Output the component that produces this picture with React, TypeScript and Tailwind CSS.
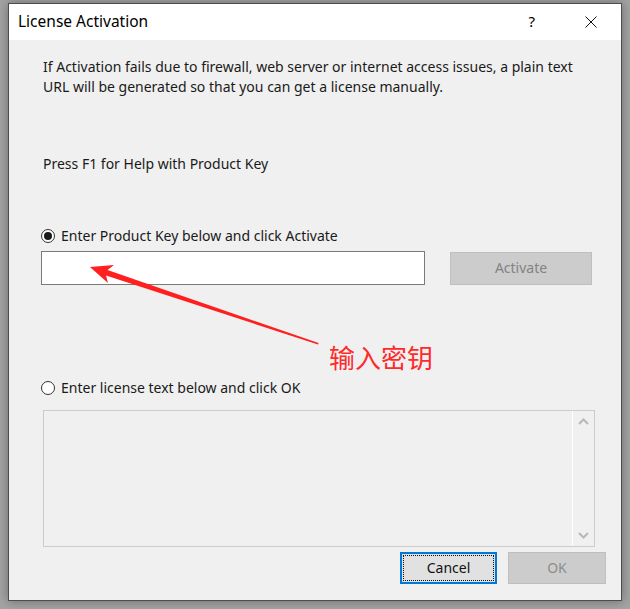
import React from "react";

const font = { fontFamily: '"Noto Sans", "Open Sans", Arial, sans-serif' };

function Radio({ checked, label }: { checked: boolean; label: string }) {
  return (
    <div className="flex h-[20px] items-center gap-[6px]">
      <span className="flex h-[14px] w-[14px] items-center justify-center rounded-full border border-[#333333] bg-white">
        {checked && <span className="h-[8px] w-[8px] rounded-full bg-[#1a1a1a]" />}
      </span>
      <span>{label}</span>
    </div>
  );
}

function Annotation() {
  // arrow: tip at (90,267), tail at (318,344)
  return (
    <div className="pointer-events-none absolute inset-0">
      <svg width="630" height="609" className="absolute left-0 top-0">
        <polygon points="90,267 108,283 106,275.5 318,344.5 318.5,343 107.5,270 114,265" fill="#ff1f1f" />
      </svg>
      <div
        className="absolute left-[329px] top-[339px] text-[26px] leading-[36px] text-[#ff2a2a]"
        style={{ fontFamily: '"Noto Sans CJK SC", sans-serif' }}
      >
        输入密钥
      </div>
    </div>
  );
}

export default function App() {
  return (
    <div className="relative h-[609px] w-[630px] overflow-hidden bg-[#a3a3a3] pl-[8px] pt-[3px]" style={font}>
      <div className="flex h-[598px] w-[614px] flex-col border border-[#4d4d4d] bg-[#f0f0f0] text-[14px] text-[#1a1a1a] shadow-[0_0_10px_rgba(0,0,0,0.35)]">
        <div className="flex h-[36px] shrink-0 items-center bg-white pb-[1px] pl-[9px] pr-[24px]">
          <span className="text-[15.5px] text-black">License Activation</span>
          <span className="ml-auto mr-[50px] text-[15px] text-black">?</span>
          <svg width="12" height="12" viewBox="0 0 12 12">
            <path d="M0.5 0.5 L11.5 11.5 M11.5 0.5 L0.5 11.5" stroke="#111" strokeWidth="1" />
          </svg>
        </div>

        <div className="flex flex-1 flex-col pl-[32px] pr-[15px] pt-[17px] leading-[20px]">
          <p className="pl-[2px] pr-[20px]">
            If Activation fails due to firewall, web server or internet access issues, a plain text URL will be generated
            so that you can get a license manually.
          </p>
          <p className="mt-[57px] pl-[2px]">Press F1 for Help with Product Key</p>

          <div className="mt-[52px]">
            <Radio checked label="Enter Product Key below and click Activate" />
          </div>
          <div className="mt-[5px] flex items-center">
            <input className="h-[34px] w-[384px] border border-[#7a7a7a] bg-white px-2 outline-none" />
            <button className="ml-[25px] h-[33px] w-[142px] border border-[#bfbfbf] bg-[#cccccc] text-[#838383]">
              Activate
            </button>
          </div>

          <div className="mt-[93px]">
            <Radio checked={false} label="Enter license text below and click OK" />
          </div>
          <div className="ml-[2px] mt-[12px] flex h-[137px] w-[552px] border border-[#cccccc] bg-[#f0f0f0]">
            <div className="flex-1 border-r border-white" />
            <div className="flex w-[21px] flex-col items-center justify-between py-[7px]">
              <svg width="11" height="7" viewBox="0 0 11 7">
                <path d="M1 6 L5.5 1.5 L10 6" stroke="#b8b8b8" strokeWidth="2" fill="none" />
              </svg>
              <svg width="11" height="7" viewBox="0 0 11 7">
                <path d="M1 1 L5.5 5.5 L10 1" stroke="#b8b8b8" strokeWidth="2" fill="none" />
              </svg>
            </div>
          </div>

          <div className="mt-[5px] flex justify-end gap-[11px]">
            <button className="h-[32px] w-[97px] border-2 border-[#0078d7] bg-[#e1e1e1] p-[1px] text-[#111]">
              <span className="flex h-full w-full items-center justify-center border border-dotted border-[#111]">
                Cancel
              </span>
            </button>
            <button className="h-[32px] w-[98px] border border-[#bfbfbf] bg-[#cccccc] text-[#8d8d8d]">OK</button>
          </div>
        </div>
      </div>
      <Annotation />
    </div>
  );
}
